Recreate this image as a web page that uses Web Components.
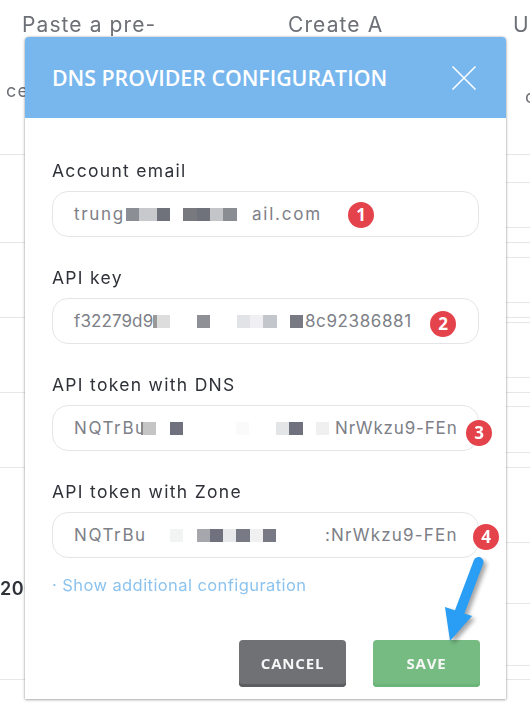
<!DOCTYPE html>
<html>
<head>
<meta charset="utf-8">
<style>
    html, body { margin: 0; height: 721px; overflow: hidden; background: #fff; }
</style>
</head>
<body>
<dns-page>
    <dns-modal title="DNS PROVIDER CONFIGURATION">
        <form-field label="Account email" badge="1" bx="295" by="10">
            <span style="width:52px;letter-spacing:1.7px">trung</span>
            <mosaic-strip width="126" cells="#8b8e94,#c8c9cc:17.6,#6f727b,#fff,#77797f,#6f727b,#c3c5c8,#8a8d92"></mosaic-strip>
            <span style="letter-spacing:1.77px">ail.com</span>
        </form-field>
        <form-field label="API key" badge="2" bx="377" by="12">
            <span style="width:79px;letter-spacing:.1px">f32279d9</span>
            <mosaic-strip width="152" cells="#999:4,#ddd,#fff,#fff,#8e9096,#fff,#fff,#e2e3e6,#f0f0f2,#c3c6cb,#fff,#777a82"></mosaic-strip>
            <span style="letter-spacing:.6px">8c92386881</span>
        </form-field>
        <form-field label="API token with DNS" badge="3" bx="413" by="14">
            <span style="width:67px;letter-spacing:1.6px">NQTrBu</span>
            <mosaic-strip width="194" cells="#888:2,#c5c5c5,#fff,#6f727e,#fff,#fff,#fff,#fff,#fafafa,#fff,#fff,#e4e5e6,#6f727e,#fff,#f0f0f0"></mosaic-strip>
            <span style="letter-spacing:.83px">NrWkzu9-FEn</span>
        </form-field>
        <form-field label="API token with Zone" badge="4" bx="420" by="11">
            <span style="width:96px;letter-spacing:1.6px">NQTrBu</span>
            <mosaic-strip width="155" cells="#f2f3f3,#fff,#a5a7ad,#6f727e,#e8e9ea,#777a84,#f0f0f1,#777a84"></mosaic-strip>
            <span style="letter-spacing:1.2px">:NrWkzu9-FEn</span>
        </form-field>
    </dns-modal>
</dns-page>
<script>
const html = String.raw;

class MosaicStrip extends HTMLElement {
    constructor() {
        super();
        const shadow = this.attachShadow({mode: 'open'});
        // each cell is colour or colour:width
        const cells = this.getAttribute('cells').split(',').map(c => c.split(':'));
        const width = this.getAttribute('width');
        shadow.innerHTML = html`
            <style>
                :host { display: flex; width: ${width}px; height: 13px; flex: none; }
                i { display: block; height: 13px; flex: none; }
            </style>
            ${cells.map(c => `<i style="background:${c[0]};width:${c[1] || 13.3}px"></i>`).join('')}
        `;
    }
}
customElements.define('mosaic-strip', MosaicStrip);

class StepBadge extends HTMLElement {
    constructor() {
        super();
        this.attachShadow({mode: 'open'}).innerHTML = html`
            <style>
                :host {
                    position: absolute;
                    display: flex;
                    width: 26px;
                    height: 26px;
                    border-radius: 50%;
                    background: #e5434b;
                    color: #fff;
                    font: 700 17px/26px "Open Sans", sans-serif;
                    letter-spacing: 0;
                    align-items: center;
                    justify-content: center;
                }
            </style>
            <slot></slot>
        `;
    }
}
customElements.define('step-badge', StepBadge);

class FormField extends HTMLElement {
    constructor() {
        super();
        const label = this.getAttribute('label');
        const shadow = this.attachShadow({mode: 'open'});
        shadow.innerHTML = html`
            <style>
                :host { display: block; margin-bottom: 30px; }
                label {
                    display: block;
                    height: 22px;
                    margin-bottom: 9px;
                    font: 400 17.5px/22px Inter, sans-serif;
                    letter-spacing: 1.3px;
                    color: #2f3238;
                }
                .box {
                    position: relative;
                    display: flex;
                    align-items: center;
                    box-sizing: border-box;
                    height: 46px;
                    padding-left: 21px;
                    border: 1px solid #e3e5e8;
                    border-radius: 16px;
                    background: #fff;
                    font: 400 17px/22px Inter, sans-serif;
                    color: #7d8087;
                    white-space: nowrap;
                }
                ::slotted(span) { flex: none; display: block; }
            </style>
            <label>${label}</label>
            <div class="box">
                <slot></slot>
                <step-badge style="left:${this.getAttribute('bx')}px;top:${this.getAttribute('by')}px">${this.getAttribute('badge')}</step-badge>
            </div>
        `;
    }
}
customElements.define('form-field', FormField);

class ActionButton extends HTMLElement {
    constructor() {
        super();
        this.attachShadow({mode: 'open'}).innerHTML = html`
            <style>
                :host {
                    display: flex;
                    align-items: center;
                    justify-content: center;
                    box-sizing: border-box;
                    width: 107px;
                    height: 47px;
                    padding-bottom: 1px;
                    border-radius: 4px;
                    background: var(--bg);
                    box-shadow: inset 0 -3px 0 var(--edge);
                    color: #f6f7f6;
                    font: 700 15px/20px "Open Sans", sans-serif;
                    letter-spacing: 0.8px;
                }
            </style>
            <slot></slot>
        `;
    }
}
customElements.define('action-button', ActionButton);

class DnsModal extends HTMLElement {
    constructor() {
        super();
        this.attachShadow({mode: 'open'}).innerHTML = html`
            <style>
                :host {
                    position: absolute;
                    left: 25px;
                    top: 37px;
                    width: 481px;
                    height: 662px;
                    display: flex;
                    flex-direction: column;
                    background: #fff;
                    border-radius: 4px 4px 0 0;
                    box-shadow: 0 0 2px rgba(60, 64, 70, .45), 0 1px 3px rgba(60, 64, 70, .35);
                }
                header {
                    display: flex;
                    align-items: center;
                    justify-content: space-between;
                    flex: none;
                    height: 81px;
                    padding: 0 30px 0 27px;
                    background: #78b7ee;
                    border-radius: 4px 4px 0 0;
                    color: #fff;
                    font: 600 21.3px/28px "Open Sans", sans-serif;
                }
                header svg { display: block; }
                main { padding: 42px 27px 0; }
                .more {
                    height: 22px;
                    margin: -14px 0 44px;
                    font: 400 16.5px/22px Inter, sans-serif;
                    letter-spacing: 0.42px;
                    color: #8cc3ee;
                }
                .actions { display: flex; justify-content: flex-end; gap: 27px; margin-right: -1px; }
            </style>
            <header>
                <span>${this.getAttribute('title')}</span>
                <svg width="24" height="24" viewBox="0 0 24 24" fill="none" stroke="#fff" stroke-width="1.5">
                    <path d="M0.5 0.5L23.5 23.5M23.5 0.5L0.5 23.5"/>
                </svg>
            </header>
            <main>
                <slot></slot>
                <div class="more">· Show additional configuration</div>
                <div class="actions">
                    <action-button style="--bg:#707174;--edge:#5d5e61">CANCEL</action-button>
                    <action-button style="--bg:#76bc82;--edge:#6cb579">SAVE</action-button>
                </div>
            </main>
        `;
    }
}
customElements.define('dns-modal', DnsModal);

class RuleColumn extends HTMLElement {
    constructor() {
        super();
        const stops = this.getAttribute('stops').split(',').map(Number);
        let prev = 0;
        const rows = stops.map(s => {
            const row = `<div style="height:${s - prev - 1}px"></div>`;
            prev = s;
            return row;
        }).join('');
        this.attachShadow({mode: 'open'}).innerHTML = html`
            <style>
                :host { display: block; }
                div { border-bottom: 1px solid #e6e7e9; }
            </style>
            ${rows}
        `;
    }
}
customElements.define('rule-column', RuleColumn);

class DnsPage extends HTMLElement {
    constructor() {
        super();
        this.attachShadow({mode: 'open'}).innerHTML = html`
            <style>
                :host { display: block; position: relative; width: 530px; height: 721px; overflow: hidden; filter: blur(0.35px); }
                .layer { grid-area: 1 / 1; }
                .back { display: grid; width: 530px; height: 721px; }
                .rules { display: grid; grid-template-columns: 25px 481px 24px; }
                .text {
                    display: grid;
                    grid-template-columns: 288px 225px 17px;
                    grid-template-rows: 52px 78px 445px 30px;
                    font: 400 21px/28px Inter, sans-serif;
                    letter-spacing: 1.1px;
                    color: #6d7076;
                    overflow: hidden;
                }
                .text span { white-space: nowrap; }
                .p1 { padding: 11px 0 0 22px; }
                .p2 { padding-top: 11px; }
                .p3 { padding-top: 11px; }
                .ce { padding: 25px 0 0 6px; font-size: 18px; }
                .c { grid-column: 3; padding: 31px 0 0 12px; font-size: 18px; }
                .num { grid-row: 4; grid-column: 1; font-weight: 600; font-size: 18px; letter-spacing: .5px; color: #2f3238; line-height: 28px; }
                svg.arrow {
                    position: absolute;
                    left: 0;
                    top: 0;
                    pointer-events: none;
                    filter: drop-shadow(3px 3px 2px rgba(0, 0, 0, .35));
                }
            </style>
            <div class="back">
                <div class="layer rules">
                    <rule-column stops="155,243,318,393,468,680"></rule-column>
                    <div></div>
                    <rule-column stops="155,183,228,243,258,303,318,323,378,393,407,453,468,543,604,666,680"></rule-column>
                </div>
                <div class="layer text">
                    <span class="p1">Paste a pre-</span>
                    <span class="p2">Create A</span>
                    <span class="p3">U</span>
                    <span class="ce">ce</span>
                    <span></span>
                    <span class="c">c</span>
                    <span class="num">200</span>
                </div>
            </div>
            <slot></slot>
            <svg class="arrow" width="530" height="721" viewBox="0 0 530 721">
                <path d="M478.5 562L460 611" stroke="#2a9df4" stroke-width="10" stroke-linecap="round" fill="none"/>
                <path d="M445 607L472 616L450 641Z" fill="#2a9df4"/>
            </svg>
        `;
    }
}
customElements.define('dns-page', DnsPage);
</script>
</body>
</html>
